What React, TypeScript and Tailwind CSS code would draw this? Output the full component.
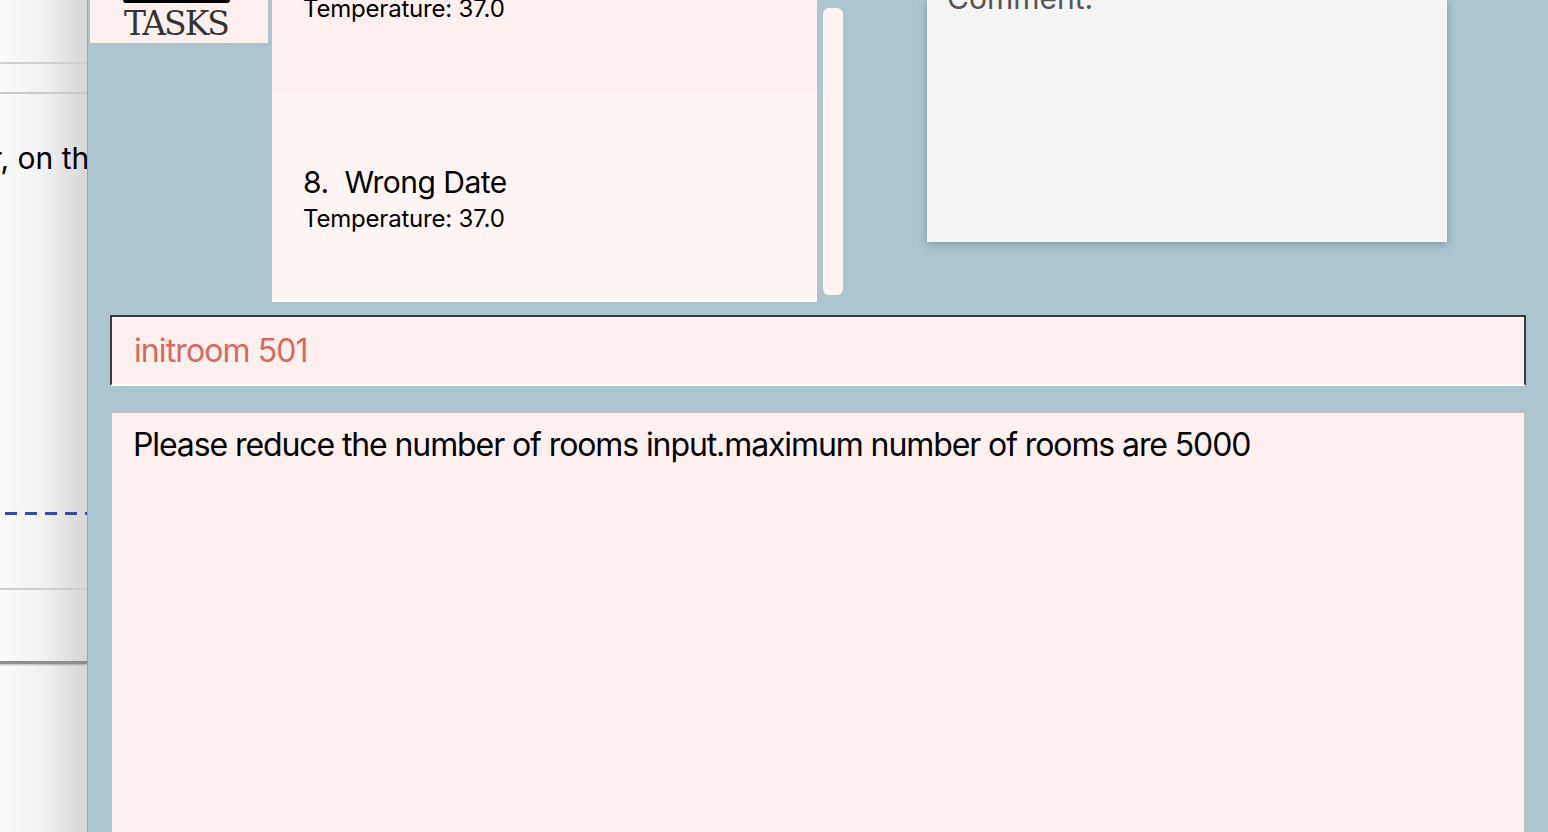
const sans = { fontFamily: 'Inter, "Noto Sans", sans-serif' }

function SidePanel() {
  return (
    <div className="relative w-[88px] h-full shrink-0 overflow-hidden border-r border-[#a3a3a7] bg-gradient-to-r from-[#fbfbfb] via-[#f1f1f1] to-[#d6d6d6]">
      <div className="h-[62px]" />
      <div className="h-[2px] bg-[#d0d0d0]" />
      <div className="h-[28px]" />
      <div className="h-[2px] bg-[#cbcbcb]" />
      <div className="h-[44px]" />
      <div className="whitespace-nowrap text-[30px] leading-[40px] text-black -ml-[9px]" style={sans}>
        r, on the
      </div>
      <div className="h-[334px]" />
      <div className="ml-[5px] h-[3px] w-[90px] bg-[repeating-linear-gradient(90deg,#3b4aa3_0,#3b4aa3_12px,transparent_12px,transparent_20px)]" />
      <div className="h-[73px]" />
      <div className="h-[2px] bg-[#cfcfcf]" />
      <div className="h-[71px]" />
      <div className="h-[3px] bg-[#8e8e8e] shadow-[0_1px_2px_rgba(0,0,0,0.25)]" />
    </div>
  )
}

function LogoBox() {
  return (
    <div className="w-[178px] h-[43px] bg-[#fff0f0] flex flex-col items-center overflow-hidden">
      <div className="w-[107px] h-[3px] bg-black rounded-b-[4px] -ml-[6px]" />
      <div
        className="font-serif text-[33px] leading-[36px] text-[#333] mt-[3px] -ml-[6px] tracking-[-2px]"
        style={{ fontFamily: '"DejaVu Serif", "Liberation Serif", serif' }}
      >
        TASKS
      </div>
    </div>
  )
}

function TaskList() {
  return (
    <div className="flex items-start h-[302px]">
      <div className="w-[545px] h-[302px] flex flex-col" style={sans}>
        <div className="h-[93px] bg-[#fff0f0] pl-[31px] overflow-hidden">
          <div className="text-[24px] leading-[30px] -mt-[6px] text-black tracking-[-0.2px]">Temperature: 37.0</div>
        </div>
        <div className="flex-1 bg-[#fff5f4] pl-[31px] pt-[70px]">
          <div className="text-[30px] leading-[38px] text-black tracking-[-0.5px]">
            8.&nbsp;&nbsp;Wrong Date
          </div>
          <div className="text-[24px] leading-[32px] mt-[2px] text-black tracking-[-0.2px]">Temperature: 37.0</div>
        </div>
      </div>
      <div className="ml-[6px] mt-[8px] w-[20px] h-[287px] rounded-[6px] bg-[#fff2f2]" />
    </div>
  )
}

function CommentCard() {
  return (
    <div className="ml-[84px] w-[520px] h-[242px] bg-[#f4f4f4] shadow-[0_2px_8px_rgba(40,60,70,0.35)] pl-[20px] overflow-hidden" style={sans}>
      <div className="text-[30px] leading-[36px] text-[#555] -mt-[20px]">Comment:</div>
    </div>
  )
}

export default function App() {
  return (
    <div className="w-[1548px] h-[832px] flex overflow-hidden bg-[#adc5cf]">
      <SidePanel />
      <div className="flex-1 flex flex-col">
        <div className="flex items-start h-[302px] pl-[2px] overflow-hidden">
          <LogoBox />
          <div className="ml-[4px]">
            <TaskList />
          </div>
          <CommentCard />
        </div>
        <div className="px-[22px] pt-[13px]">
          <div
            className="h-[71px] bg-[#fff0f0] border-2 border-t-[#3a3a3a] border-l-[#3a3a3a] border-r-[#3a3a3a] border-b-white flex items-center pl-[22px]"
            style={sans}
          >
            <span className="text-[32px] text-[#d76a5c] tracking-[-0.9px]">initroom 501</span>
          </div>
        </div>
        <div className="flex-1 px-[23px] pt-[26px]">
          <div className="h-full bg-[#fff0f0] border border-[#c9b9b9] border-b-0 pl-[21px] pt-[12px]" style={sans}>
            <div className="text-[32px] leading-[40px] text-black tracking-[-1.1px]">
              Please reduce the number of rooms input.maximum number of rooms are 5000
            </div>
          </div>
        </div>
      </div>
    </div>
  )
}
